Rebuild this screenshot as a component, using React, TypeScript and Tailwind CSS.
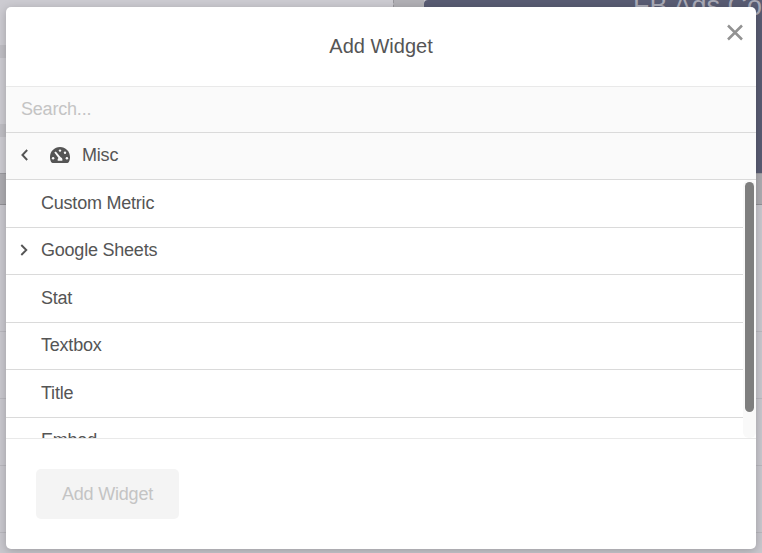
import React from 'react';

interface WidgetItem {
  label: string;
  expandable?: boolean;
}

const items: WidgetItem[] = [
  { label: 'Custom Metric' },
  { label: 'Google Sheets', expandable: true },
  { label: 'Stat' },
  { label: 'Textbox' },
  { label: 'Title' },
  { label: 'Embed' },
];

function Chevron({ direction }: { direction: 'left' | 'right' }) {
  return (
    <svg width="8" height="12" viewBox="0 0 8 12" fill="none" stroke="#555" strokeWidth="1.9">
      <path d={direction === 'left' ? 'M6.2 1 L1.4 6 L6.2 11' : 'M1.3 1 L6.3 6 L1.3 11'} />
    </svg>
  );
}

function GaugeIcon() {
  return (
    <svg width="20" height="16" viewBox="0 0 20 16">
      <path d="M10 0 C4.4 0 0 4.4 0 10 C0 12 .4 13.6 1.2 15 C1.6 15.7 2 16 2.7 16 H17.3 C18 16 18.4 15.7 18.8 15 C19.6 13.6 20 12 20 10 C20 4.4 15.6 0 10 0Z" fill="#555" />
      <g fill="#fafafa">
        <circle cx="10" cy="3.6" r="1.2" />
        <circle cx="15" cy="5.7" r="1.2" />
        <circle cx="3.1" cy="11.3" r="1.25" />
        <circle cx="16.9" cy="11.3" r="1.25" />
        <path d="M4.3 5.4 L5.8 4.4 L10.7 10.2 C12 10.5 12.8 12 12.3 13.8 H7.8 C7.3 12.5 7.8 11.4 8.5 10.9Z" />
      </g>
    </svg>
  );
}

function Backdrop() {
  return (
    <div className="absolute inset-0 flex flex-col bg-[#c9c8ce]">
      <div className="flex h-[173px] shrink-0">
        <div className="flex w-[393px] flex-col bg-[#cccbd1] pt-[45px]">
          <div className="h-[13px] bg-[#bfbec4]" />
          <div className="mt-[66px] h-[13px] bg-[#bfbec4]" />
        </div>
        <div className="w-[31px] border-l border-dashed border-[#98979c] bg-[#b1b0b5]" />
        <div className="flex-1 overflow-hidden rounded-l-[4px] bg-[#595c73] pl-[209px]">
          <div className="-mt-[10px] whitespace-nowrap text-[27px] leading-[32px] text-[#a9aab6]">FB Ads Co</div>
        </div>
      </div>
      <div className="h-8 shrink-0 border-b border-t border-b-[#929196] border-t-[#9b9a9f] bg-[#adacb1]" />
      <div className="h-[127px] shrink-0 border-b border-[#b9b8be]" />
      <div className="h-[67px] shrink-0 border-b border-[#b9b8be]" />
      <div className="h-[67px] shrink-0 border-b border-[#b9b8be]" />
      <div className="h-[67px] shrink-0 border-b border-[#b9b8be]" />
    </div>
  );
}

export default function App() {
  return (
    <div className="relative h-[553px] w-[762px] overflow-hidden px-[6px] pt-[7px] font-['Liberation_Sans',Arial,sans-serif] text-[#555]">
      <Backdrop />
      <div className="relative flex h-[542px] w-[750px] flex-col overflow-hidden rounded-[5px] bg-white shadow-[0_2px_10px_rgba(0,0,0,0.22)]">
        <header className="relative flex h-[79px] shrink-0 items-center justify-center pb-[2px]">
          <h2 className="text-[20px] leading-6">Add Widget</h2>
          <button className="absolute right-[13px] top-[17px]">
            <svg width="16" height="17" viewBox="0 0 16 17" fill="none" stroke="#929292" strokeWidth="2.5">
              <path d="M1 1.5 L15 15.5 M15 1.5 L1 15.5" />
            </svg>
          </button>
        </header>
        <div className="h-[47px] shrink-0 border-b border-t border-b-[#dadada] border-t-[#e9e9e9] bg-[#fafafa]">
          <input
            placeholder="Search..."
            className="h-[44px] w-full bg-transparent px-[15px] text-[18px] tracking-[-0.2px] outline-none placeholder:text-[#c4c4c4]"
          />
        </div>
        <div className="flex h-[47px] shrink-0 items-center border-b border-[#dadada] bg-[#fafafa] pb-[2px] pl-[15px] text-[18px]">
          <Chevron direction="left" />
          <span className="ml-[21px]">
            <GaugeIcon />
          </span>
          <span className="ml-[12px] tracking-[-0.2px]">Misc</span>
        </div>
        <div className="flex h-[258px] shrink-0 overflow-hidden">
          <ul className="flex-1">
            {items.map(item => (
              <li
                key={item.label}
                className="flex h-[47.5px] items-center border-b border-[#dadada] text-[18px] tracking-[-0.22px]"
              >
                <span className="w-[35px] pb-[2px] pl-[14px]">{item.expandable && <Chevron direction="right" />}</span>
                {item.label}
              </li>
            ))}
          </ul>
          <div className="w-[13px] rounded-[6px] bg-[#f9f9f9] px-[2px] pt-[2px]">
            <div className="h-[230px] w-[9px] rounded-full bg-[#7e7e7e]" />
          </div>
        </div>
        <footer className="flex-1 border-t border-[#e9e9e9] px-[30px] pt-[30px]">
          <button className="h-[50px] w-[143px] rounded-[5px] bg-[#f4f4f4] text-[18px] tracking-[-0.2px] text-[#c4c4c4]" disabled>
            Add Widget
          </button>
        </footer>
      </div>
    </div>
  );
}
